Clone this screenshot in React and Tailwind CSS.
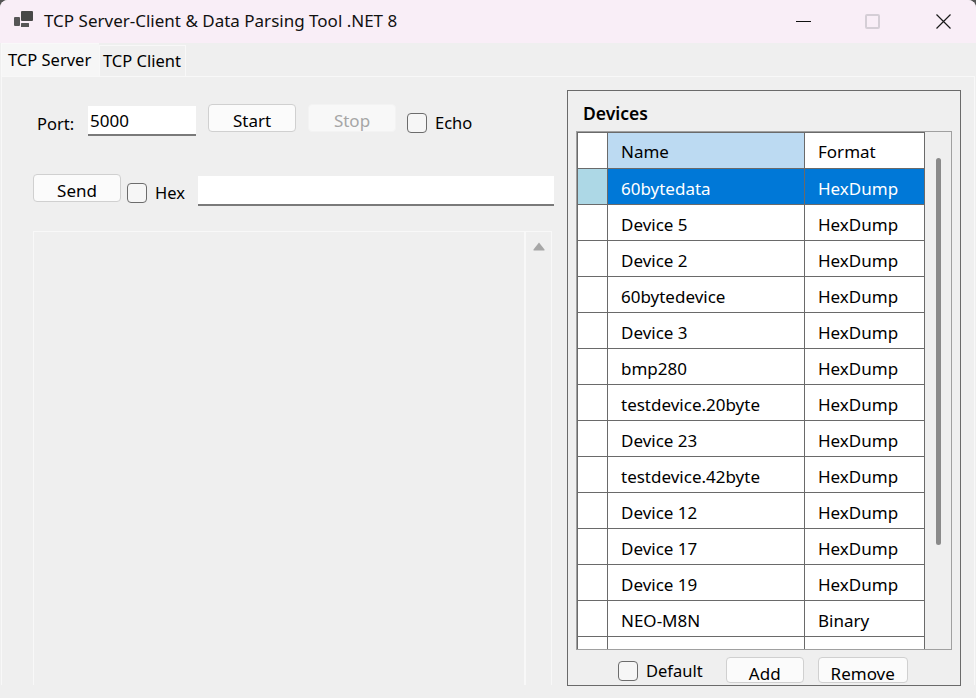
import React from "react";

const devices = [
  { name: "60bytedata", format: "HexDump" },
  { name: "Device 5", format: "HexDump" },
  { name: "Device 2", format: "HexDump" },
  { name: "60bytedevice", format: "HexDump" },
  { name: "Device 3", format: "HexDump" },
  { name: "bmp280", format: "HexDump" },
  { name: "testdevice.20byte", format: "HexDump" },
  { name: "Device 23", format: "HexDump" },
  { name: "testdevice.42byte", format: "HexDump" },
  { name: "Device 12", format: "HexDump" },
  { name: "Device 17", format: "HexDump" },
  { name: "Device 19", format: "HexDump" },
  { name: "NEO-M8N", format: "Binary" },
];

function Btn({ children, className = "" }) {
  return (
    <button className={`h-[28px] w-[88px] rounded-[4px] border border-[#d0d0d0] bg-[#fbfbfb] pt-[3px] text-center text-[17px] leading-[26px] text-black ${className}`}>
      {children}
    </button>
  );
}

function Check({ label, className = "" }) {
  return (
    <label className={`flex items-center ${className}`}>
      <span className="h-[20px] w-[20px] rounded-[4px] border border-[#6c6c6c] bg-[#f6f6f6]"></span>
      <span className="mt-[1px] ml-[8px] leading-[20px] text-black">{label}</span>
    </label>
  );
}

function TextBox({ value, className = "" }) {
  return (
    <div className={`h-[30px] border-b-2 border-[#7a7a7a] bg-white pl-[2px] text-[17px] leading-[29px] text-black ${className}`}>
      {value}
    </div>
  );
}

export default function App() {
  return (
    <div className="h-[698px] w-[976px] overflow-hidden bg-[#555555] text-[16.5px]" style={{ fontFamily: '"Noto Sans", sans-serif' }}>
      <div className="flex h-full flex-col overflow-hidden rounded-t-[8px] bg-[#efefef]">
        {/* Title bar */}
        <div className="flex h-[43px] shrink-0 items-center bg-[#f9eef7] pl-[14px]">
          <svg className="mb-[5px]" width="19" height="16" viewBox="0 0 19 16" fill="#484848">
            <rect x="7" y="0" width="12" height="10" rx="1" />
            <rect x="0" y="6" width="6" height="9" rx="1" fill="#565656" />
            <rect x="7" y="12" width="8" height="4" rx="0.5" fill="#565656" />
          </svg>
          <span className="ml-[11px] mb-[2px] text-[17px] text-[#111111]">TCP Server-Client &amp; Data Parsing Tool .NET 8</span>
          <div className="ml-auto flex items-center pr-[25px]">
            <div className="h-[1px] w-[15px] bg-[#111111]"></div>
            <div className="ml-[54px] h-[15px] w-[15px] rounded-[2px] border-2 border-[#d5ced6]"></div>
            <svg className="ml-[56px]" width="15" height="15" viewBox="0 0 15 15" stroke="#1a1a1a" strokeWidth="1.2" fill="none">
              <path d="M0.5 0.5L14.5 14.5M14.5 0.5L0.5 14.5" />
            </svg>
          </div>
        </div>

        {/* Tabs */}
        <div className="flex h-[33px] shrink-0 items-end pl-[1px]">
          <div className="h-[33px] w-[98px] border-t border-l border-[#f9f9f9] bg-[#f6f6f6] pl-[6px] leading-[31px] text-black">TCP Server</div>
          <div className="h-[31px] w-[87px] border border-b-0 border-[#f8f8f8] pl-[3px] leading-[29px] text-black">TCP Client</div>
        </div>

        {/* Tab page */}
        <div className="mx-[1px] flex h-[609px] shrink-0 border border-b-0 border-[#f8f8f8] pl-[31px]">
          {/* Server side */}
          <div className="w-[534px] shrink-0">
            <div className="mt-[27px] flex h-[32px] items-start">
              <span className="mt-[9px] ml-[4px] w-[51px] leading-[22px] text-black">Port:</span>
              <TextBox value="5000" className="mt-[2px] w-[108px]" />
              <Btn className="ml-[12px]">Start</Btn>
              <button className="ml-[12px] h-[28px] w-[88px] rounded-[4px] border border-[#f3f3f3] bg-[#f8f8f8] pt-[3px] text-[17px] leading-[26px] text-[#a6a6a6]">Stop</button>
              <Check label="Echo" className="mt-[8px] ml-[11px]" />
            </div>
            <div className="mt-[38px] flex h-[32px] items-start">
              <Btn>Send</Btn>
              <Check label="Hex" className="mt-[8px] ml-[6px]" />
              <TextBox className="mt-[2px] ml-[13px] w-[356px]" />
            </div>
            {/* Log box */}
            <div className="mt-[25px] flex h-[454px] w-[519px] justify-end border border-b-0 border-[#f8f8f8]">
              <div className="flex w-[27px] justify-center border-l-2 border-[#f8f8f8] pt-[10px]">
                <svg width="12" height="9" viewBox="0 0 12 9" fill="#a6a6a6">
                  <path d="M6 0.5L11.5 7.5Q12 8.5 11 8.5H1Q0 8.5 0.5 7.5Z" />
                </svg>
              </div>
            </div>
          </div>

          {/* Devices group */}
          <div className="mt-[13px] flex h-[596px] w-[394px] shrink-0 flex-col border border-[#6a6a6a] pl-[8px]">
            <div className="mt-[10px] ml-[7px] h-[30px] text-[17.5px] leading-[24px] font-semibold text-black">Devices</div>
            <div className="flex h-[519px] w-[376px] border border-[#a0a0a0]">
              <div className="w-[348px] shrink-0 overflow-hidden border-t border-l border-[#6a6a6a] text-[17px]">
                <div className="flex h-[36px] border-b border-[#6a6a6a]">
                  <div className="w-[30px] border-r border-[#6a6a6a] bg-white"></div>
                  <div className="w-[197px] border-r border-[#6a6a6a] bg-[#bcdaf2] pl-[13px] leading-[37px] text-black">Name</div>
                  <div className="w-[120px] border-r border-[#6a6a6a] bg-white pl-[13px] leading-[37px] text-black">Format</div>
                </div>
                {devices.map((d, i) => (
                  <div key={d.name} className={`flex h-[36px] border-b border-[#6a6a6a] ${i === 0 ? "bg-[#0078d7] text-white" : "bg-white text-black"}`}>
                    <div className={`w-[30px] border-r border-[#6a6a6a] ${i === 0 ? "bg-[#add8e6]" : "bg-white"}`}></div>
                    <div className="w-[197px] border-r border-[#6a6a6a] pl-[13px] leading-[39px]">{d.name}</div>
                    <div className="w-[120px] border-r border-[#6a6a6a] pl-[13px] leading-[39px]">{d.format}</div>
                  </div>
                ))}
                <div className="flex h-[20px] bg-white">
                  <div className="w-[30px] border-r border-[#6a6a6a]"></div>
                  <div className="w-[197px] border-r border-[#6a6a6a]"></div>
                  <div className="w-[120px] border-r border-[#6a6a6a]"></div>
                </div>
              </div>
              <div className="flex-1 pt-[26px] pl-[11px]">
                <div className="h-[387px] w-[5px] rounded-full bg-[#8a8a8a]"></div>
              </div>
            </div>
            <div className="flex items-start">
              <Check label="Default" className="mt-[10px] ml-[42px]" />
              <Btn className="mt-[7px] ml-[23px] !h-[26px] !w-[78px] !pt-[2px] !leading-[28px]">Add</Btn>
              <Btn className="mt-[7px] ml-[14px] !h-[26px] !w-[90px] !pt-[2px] !leading-[28px]">Remove</Btn>
            </div>
          </div>
        </div>
      </div>
    </div>
  );
}
